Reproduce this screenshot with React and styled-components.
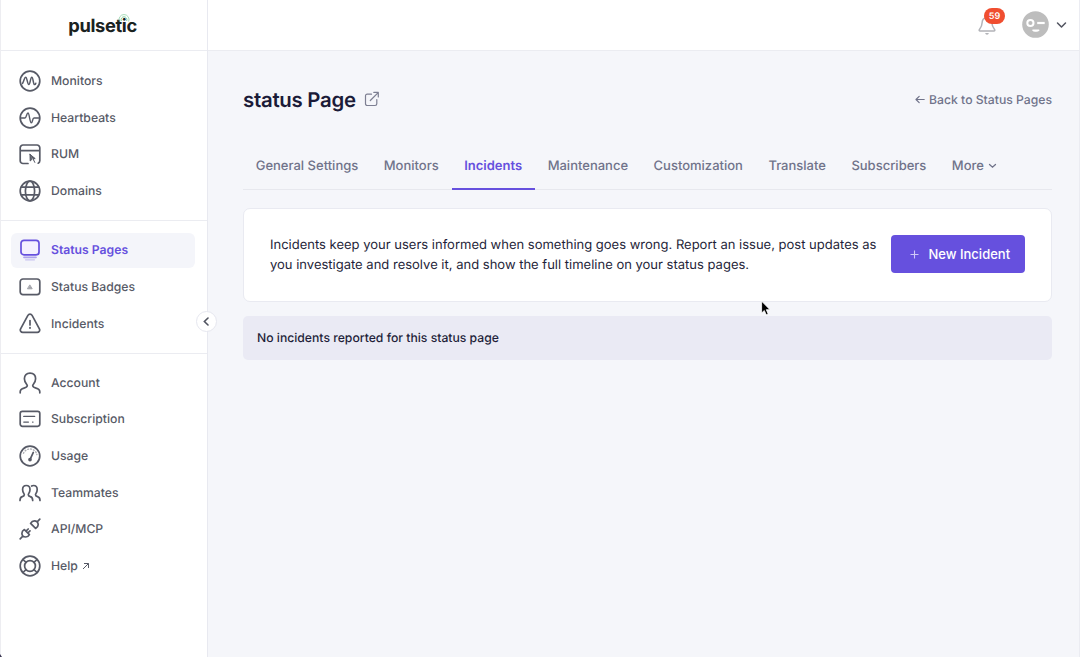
import React from "react";
import styled, { createGlobalStyle } from "styled-components";

const GlobalStyle = createGlobalStyle`
  * {
    box-sizing: border-box;
  }
  body {
    margin: 0;
    background: #f5f6fa;
    font-family: Inter, "Liberation Sans", sans-serif;
    text-rendering: geometricPrecision;
    -webkit-font-smoothing: antialiased;
    overflow: hidden;
  }
`;

const Layout = styled.div`
  display: grid;
  grid-template-columns: 208px 1fr;
  height: 100vh;
  overflow: hidden;
`;

const Sidebar = styled.aside`
  position: relative;
  background: #ffffff;
  border-left: 1px solid #ededf1;
  border-right: 1px solid #e8e9f0;
  &::after {
    content: "";
    position: absolute;
    left: -1px;
    bottom: 0;
    border-left: 2px solid #3b3752;
    border-top: 3px solid transparent;
  }
`;

const Brand = styled.div`
  height: 51px;
  display: flex;
  align-items: center;
  justify-content: center;
  border-bottom: 1px solid #ebecf1;
  padding: 1px 3px 0 0;
`;

const BrandName = styled.span`
  position: relative;
  font-size: 18.3px;
  font-weight: 700;
  line-height: 22px;
  letter-spacing: -0.35px;
  color: #1a2221;
`;

const BrandSignal = styled.svg`
  position: absolute;
  left: 50px;
  top: -2px;
`;

const NavGroup = styled.nav`
  display: flex;
  flex-direction: column;
  gap: 2px;
  padding: 13px 12px 11.8px 10px;
  & + & {
    border-top: 1px solid #ebecf1;
    padding-top: 12px;
    padding-bottom: 11.6px;
  }
`;

const NavItem = styled.a`
  display: flex;
  align-items: center;
  height: 34.6px;
  padding-left: 8px;
  gap: 10px;
  border-radius: 6px;
  font-size: 12.2px;
  font-weight: ${(props) => (props.$active ? 600 : 500)};
  color: ${(props) => (props.$active ? "#6650de" : "#575a66")};
  background: ${(props) => (props.$active ? "#f4f5fa" : "transparent")};
  & > svg {
    flex: none;
  }
`;

const NavLabel = styled.span`
  padding-bottom: 1.2px;
`;

const HelpArrow = styled.svg`
  margin-left: -6px;
`;

const CollapseButton = styled.button`
  position: absolute;
  right: -10px;
  top: 311px;
  width: 21px;
  height: 21px;
  padding: 0 1px 0 0;
  display: flex;
  align-items: center;
  justify-content: center;
  border: 1px solid #e6e7ef;
  border-radius: 50%;
  background: #ffffff;
`;

const Main = styled.main`
  display: flex;
  flex-direction: column;
  min-width: 0;
  border-right: 1px solid #ebecf2;
`;

const Topbar = styled.header`
  height: 51px;
  display: flex;
  align-items: center;
  justify-content: flex-end;
  padding: 0 12px 1px 0;
  background: #ffffff;
  border-bottom: 1px solid #ebecf1;
`;

const Bell = styled.div`
  position: relative;
  display: flex;
  margin: 2px 26px 0 0;
`;

const BellCount = styled.span`
  position: absolute;
  left: 6px;
  top: -8px;
  width: 21px;
  height: 16px;
  border-radius: 8px;
  background: #f04e30;
  color: #ffffff;
  font-size: 9px;
  font-weight: 600;
  line-height: 17px;
  text-align: center;
`;

const Chevron = styled.svg`
  margin-left: 7px;
`;

const Content = styled.div`
  padding: 0 27px 0 35px;
`;

const TitleRow = styled.div`
  display: flex;
  align-items: center;
  height: 97px;
`;

const Title = styled.h1`
  margin: 0;
  font-size: 20.4px;
  font-weight: 600;
  letter-spacing: -0.27px;
  color: #1b1b38;
`;

const OpenIcon = styled.svg`
  margin: 0 0 1px 8px;
`;

const BackLink = styled.a`
  display: flex;
  align-items: center;
  gap: 4px;
  margin-left: auto;
  font-size: 12.2px;
  line-height: 16px;
  font-weight: 500;
  color: #70738a;
`;

const Tabs = styled.div`
  display: flex;
  height: 42px;
  border-bottom: 1px solid #e7e8ee;
`;

const Tab = styled.a`
  display: flex;
  align-items: center;
  gap: 4px;
  height: 42px;
  padding: 0 12.8px 5px 12.7px;
  font-size: 13px;
  font-weight: ${(props) => (props.$active ? 600 : 500)};
  color: ${(props) => (props.$active ? "#6650de" : "#70738a")};
  border-bottom: 2px solid
    ${(props) => (props.$active ? "#6650de" : "transparent")};
`;

const IntroCard = styled.section`
  display: flex;
  align-items: center;
  justify-content: space-between;
  height: 94px;
  margin-top: 18px;
  padding: 0 26px 2px;
  background: #ffffff;
  border: 1px solid #e9eaf1;
  border-radius: 7px;
`;

const IntroText = styled.p`
  width: 615px;
  margin: 2px 0 0;
  font-size: 13px;
  line-height: 20px;
  color: #1f1f3a;
  white-space: nowrap;
`;

const PrimaryButton = styled.button`
  flex: none;
  display: flex;
  align-items: center;
  gap: 10px;
  width: 134px;
  height: 38px;
  padding: 0 0 0 18.5px;
  border: 0;
  border-radius: 4px;
  background: #6650de;
  color: #ffffff;
  font-family: inherit;
  font-size: 13px;
  font-weight: 500;
`;

const EmptyState = styled.div`
  display: flex;
  align-items: center;
  height: 44px;
  margin-top: 14px;
  padding: 0 14px 1.5px;
  border-radius: 5px;
  background: #eaeaf4;
  color: #1f1f3a;
  font-size: 12.2px;
  font-weight: 500;
`;

const Pointer = styled.svg`
  position: absolute;
  left: 760px;
  top: 300px;
`;

const Icon = ({ children }) => (
  <svg
    width="22"
    height="22"
    viewBox="0 0 22 22"
    fill="none"
    stroke="currentColor"
    strokeWidth="1.7"
    strokeLinecap="round"
    strokeLinejoin="round"
  >
    {children}
  </svg>
);

const icons = {
  monitors: (
    <>
      <circle cx="11" cy="11" r="9.8" />
      <path
        d="M3.5 13.5C5 11.5 5.3 7.2 6.7 7.2S8.4 14.6 9.8 14.6 11.4 7.2 12.8 7.2 14.2 14.6 15.5 14.6C16.2 14.6 16.6 14 16.8 13.2"
        strokeWidth="1.5"
      />
    </>
  ),
  heartbeats: (
    <>
      <circle cx="11" cy="11" r="9.8" />
      <path
        d="M1.8 11H6C7.4 11 7.6 6 9 6S10.8 15.8 12.3 15.8 13.3 11 15 11H20.2"
        strokeWidth="1.4"
      />
    </>
  ),
  rum: (
    <>
      <path d="M6.5 20.5H4A2.8 2.8 0 0 1 1.2 17.7V4.8A2.8 2.8 0 0 1 4 2H18A2.8 2.8 0 0 1 20.8 4.8V17.7A2.8 2.8 0 0 1 19.2 20.2M1.2 7.6H20.8M6.5 20.5H9" />
      <path
        d="M11 11.4L16.2 15.6 14.1 15.9 15.8 19.4M11 11.4L11.2 18 12.7 16.6Z"
        fill="currentColor"
        strokeWidth="1"
      />
    </>
  ),
  domains: (
    <>
      <circle cx="11" cy="11" r="9.8" />
      <ellipse cx="11" cy="11" rx="4.6" ry="9.8" />
      <path d="M2.4 7.2H19.6M2.4 14.8H19.6" />
    </>
  ),
  statusPages: (
    <>
      <rect
        x="2"
        y="1.3"
        width="18"
        height="14.6"
        rx="3"
        fill="#f4f0ff"
        strokeWidth="1.7"
      />
      <path d="M5 18.3H17" opacity="0.5" strokeWidth="1.7" />
      <path d="M6.5 20.8H15.5" opacity="0.3" strokeWidth="1.2" />
    </>
  ),
  statusBadges: (
    <>
      <rect x="1.2" y="3" width="19.6" height="15.6" rx="2.8" />
      <path
        d="M11 9.2L13.2 12.8H8.8Z"
        fill="currentColor"
        strokeWidth="1"
        opacity="0.55"
      />
    </>
  ),
  incidents: (
    <>
      <path d="M8.9 2.4C9.8.8 12.2.8 13.1 2.4L20.4 15.8C21.3 17.6 20.1 19.4 18.2 19.4H3.8C1.9 19.4.7 17.6 1.6 15.8Z" />
      <path d="M11 7.6V12" />
      <path d="M11 14.8V15" strokeWidth="1.9" />
    </>
  ),
  account: (
    <path d="M1.2 20.8V19.8C1.2 17.2 2.8 16.6 5 16.1 7 15.6 8.3 15 8.3 13.6 8.3 12.3 5.4 10.8 5.4 6.8 5.4 3.4 7.6 1.1 11 1.1S16.6 3.4 16.6 6.8C16.6 10.8 13.7 12.3 13.7 13.6 13.7 15 15 15.6 17 16.1 19.2 16.6 20.8 17.2 20.8 19.8V20.8" />
  ),
  subscription: (
    <>
      <rect x="1.2" y="3.3" width="19.6" height="15" rx="2.2" />
      <path d="M4.8 8.4H15.6" strokeWidth="1.4" />
      <path d="M4.8 14.1H9.4M13.6 14.1H14" strokeWidth="1.4" />
    </>
  ),
  usage: (
    <>
      <circle cx="11" cy="11" r="9.8" />
      <path
        d="M4.5 8.2A7.1 7.1 0 0 1 17.9 9.5"
        strokeWidth="1.4"
        strokeDasharray="0.8 2.1"
        opacity="0.5"
      />
      <path d="M14.3 7.4L11.1 14.3" />
      <circle cx="11" cy="14.6" r="1" fill="currentColor" />
    </>
  ),
  teammates: (
    <>
      <path d="M1 18.4C1 15.6 1.6 15.1 3.3 14.6 4.7 14.2 5.3 13.8 5.3 12.7 5.3 11.6 3.6 10.7 3.6 7.6 3.6 5 5 3.5 7.3 3.5S11 5 11 7.6C11 10.7 9.3 11.6 9.3 12.7 9.3 13.8 9.9 14.2 11.3 14.6 13 15.1 13.7 15.8 13.7 18.4" />
      <path d="M12.6 4C13.1 3.7 13.7 3.5 14.5 3.5 16.8 3.5 18.2 5 18.2 7.6 18.2 10.7 16.5 11.6 16.5 12.7 16.5 13.8 17.1 14.2 18.5 14.6 20.2 15.1 21 15.8 21 18.4" />
    </>
  ),
  api: (
    <>
      <path d="M11.6 5.4L16.6 10.4C18.4 9.4 19.2 8.6 19.2 6.8 19.2 4.4 17.6 2.8 15.4 2.8 13.6 2.8 12.6 3.6 11.6 5.4ZM18.2 3.8L20.8 1.2" />
      <path d="M5.4 11.6L10.4 16.6C9.4 18.4 8.4 19 6.8 19 4.4 19 2.9 17.4 2.9 15.2 2.9 13.6 3.6 12.6 5.4 11.6ZM3.8 18.2L1.2 20.8M7 13.2L9.2 11M8.8 15L11 12.8" />
    </>
  ),
  help: (
    <>
      <circle cx="11" cy="11" r="9.8" />
      <circle cx="11" cy="11" r="5.4" />
      <path d="M4 4.5L7 7.4M18 4.5L15 7.4M4 17.5L7 14.6M18 17.5L15 14.6" />
    </>
  ),
};

const groups = [
  [
    { icon: "monitors", label: "Monitors" },
    { icon: "heartbeats", label: "Heartbeats" },
    { icon: "rum", label: "RUM" },
    { icon: "domains", label: "Domains" },
  ],
  [
    { icon: "statusPages", label: "Status Pages", active: true },
    { icon: "statusBadges", label: "Status Badges" },
    { icon: "incidents", label: "Incidents" },
  ],
  [
    { icon: "account", label: "Account" },
    { icon: "subscription", label: "Subscription" },
    { icon: "usage", label: "Usage" },
    { icon: "teammates", label: "Teammates" },
    { icon: "api", label: "API/MCP" },
    { icon: "help", label: "Help", external: true },
  ],
];

const tabs = [
  "General Settings",
  "Monitors",
  "Incidents",
  "Maintenance",
  "Customization",
  "Translate",
  "Subscribers",
];

const SideMenu = () => (
  <Sidebar>
    <Brand>
      <BrandName>
        pulsetic
        <BrandSignal width="12" height="10" fill="none" stroke="#86cf9f">
          <path d="M1.4 8.5A5 5 0 1 1 10.6 8.5" opacity="0.7" />
          <path d="M3.4 8A2.9 2.9 0 1 1 8.6 8" />
        </BrandSignal>
      </BrandName>
    </Brand>
    {groups.map((items) => (
      <NavGroup key={items[0].label}>
        {items.map((item) => (
          <NavItem key={item.label} $active={item.active}>
            <Icon>{icons[item.icon]}</Icon>
            <NavLabel>{item.label}</NavLabel>
            {item.external && (
              <HelpArrow
                width="8"
                height="8"
                fill="none"
                stroke="currentColor"
                strokeWidth="1"
              >
                <path d="M1 7L6.5 1.5M2 1.5H6.5V6" />
              </HelpArrow>
            )}
          </NavItem>
        ))}
      </NavGroup>
    ))}
    <CollapseButton>
      <svg width="6" height="9" fill="none" stroke="#50535f" strokeWidth="1.6">
        <path d="M5 1L1.4 4.5 5 8" strokeLinecap="round" />
      </svg>
    </CollapseButton>
  </Sidebar>
);

const UserBar = () => (
  <Topbar>
    <Bell>
      <svg
        width="18"
        height="20"
        fill="none"
        stroke="#b2b3b8"
        strokeWidth="1.5"
        strokeLinejoin="round"
      >
        <path d="M9 1.8C5.8 1.8 4.2 4 4.1 6.8 4 9.7 3.4 11.2 1.6 13.2 0.8 14.1 1.1 15 2.2 15H15.8C16.9 15 17.2 14.1 16.4 13.2 14.6 11.2 14 9.7 13.9 6.8 13.8 4 12.2 1.8 9 1.8Z" />
        <path d="M7.2 17.1H10.8C10.6 18.2 10 18.8 9 18.8S7.4 18.2 7.2 17.1Z" fill="#b2b3b8" stroke="none" />
      </svg>
      <BellCount>59</BellCount>
    </Bell>
    <svg width="27" height="27" fill="none" stroke="#ffffff">
      <circle cx="13.5" cy="13.5" r="13.3" fill="#bdbdbd" stroke="none" />
      <circle cx="8.4" cy="12" r="3.1" strokeWidth="2" />
      <path d="M15.2 12H22.7" strokeWidth="2.2" />
      <path
        d="M10.8 19.2C11.4 20.6 16 20.6 16.9 19.2Z"
        strokeWidth="1.2"
        fill="#ffffff"
        strokeLinejoin="round"
      />
    </svg>
    <Chevron
      width="11"
      height="8"
      fill="none"
      stroke="#50535f"
      strokeWidth="1.5"
      strokeLinecap="round"
      strokeLinejoin="round"
    >
      <path d="M1.5 2L5.5 6 9.5 2" />
    </Chevron>
  </Topbar>
);

const App = () => {
  return (
    <>
      <GlobalStyle />
      <Layout>
        <SideMenu />
        <Main>
          <UserBar />
          <Content>
            <TitleRow>
              <Title>status Page</Title>
              <OpenIcon
                width="16"
                height="16"
                fill="none"
                stroke="#7d7f92"
                strokeWidth="1.2"
                strokeLinecap="round"
                strokeLinejoin="round"
              >
                <path d="M7.5 3.2H3.2A1.7 1.7 0 0 0 1.5 4.9V12.8A1.7 1.7 0 0 0 3.2 14.5H11.1A1.7 1.7 0 0 0 12.8 12.8V8.5M6.3 9.5L14.2 1.6M9.8 1.4H14.3V6" />
              </OpenIcon>
              <BackLink>
                <svg
                  width="10"
                  height="9"
                  fill="none"
                  stroke="currentColor"
                  strokeWidth="1.2"
                  strokeLinecap="round"
                  strokeLinejoin="round"
                >
                  <path d="M9.2 4.5H1.2M4.2 1.3L1 4.5 4.2 7.7" />
                </svg>
                Back to Status Pages
              </BackLink>
            </TitleRow>
            <Tabs>
              {tabs.map((tab) => (
                <Tab key={tab} $active={tab === "Incidents"}>
                  {tab}
                </Tab>
              ))}
              <Tab>
                More
                <svg
                  width="9"
                  height="6"
                  fill="none"
                  stroke="currentColor"
                  strokeWidth="1.3"
                  strokeLinecap="round"
                >
                  <path d="M1.5 1.5L4.5 4.2 7.5 1.5" />
                </svg>
              </Tab>
            </Tabs>
            <IntroCard>
              <IntroText>
                Incidents keep your users informed when something goes wrong.
                Report an issue, post updates as
                <br />
                you investigate and resolve it, and show the full timeline on
                your status pages.
              </IntroText>
              <PrimaryButton>
                <svg width="9" height="9" stroke="#cfc8f7" strokeWidth="1.1">
                  <path d="M4.5 0.5V8.5M0.5 4.5H8.5" />
                </svg>
                New Incident
              </PrimaryButton>
            </IntroCard>
            <EmptyState>No incidents reported for this status page</EmptyState>
          </Content>
        </Main>
      </Layout>
      <Pointer width="12" height="18">
        <path
          d="M1.6 1.2V13L4.3 10.5 6.2 14.8 8.2 13.9 6.3 9.7H10Z"
          fill="#000000"
          stroke="#ffffff"
          strokeWidth="0.8"
        />
      </Pointer>
    </>
  );
};

export default App;
